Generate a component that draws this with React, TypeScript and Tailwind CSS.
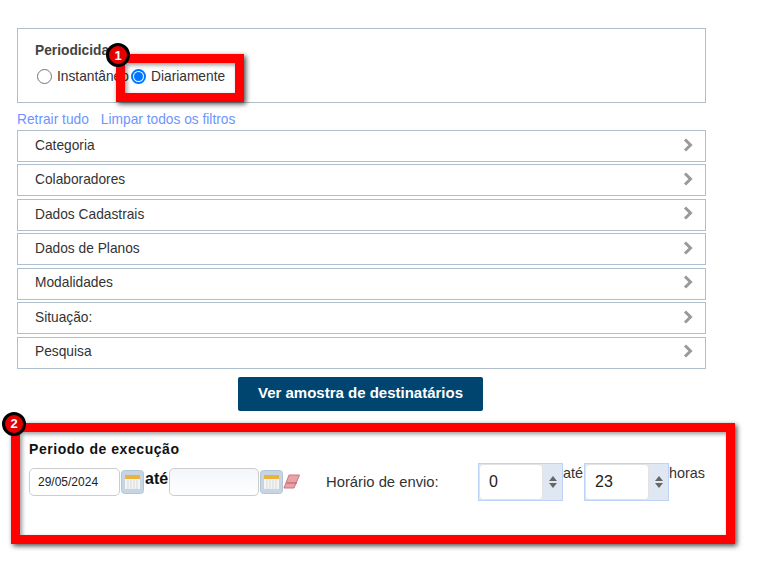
const filters = ["Categoria", "Colaboradores", "Dados Cadastrais", "Dados de Planos", "Modalidades", "Situação:", "Pesquisa"]

const Badge = ({ n, className }: { n: string; className: string }) => (
  <div className={`absolute flex h-[24px] w-[24px] items-center justify-center rounded-full border-[3px] border-black bg-[#e30000] text-[13px] font-bold leading-none text-white ${className}`}>
    {n}
  </div>
)

const CalendarIcon = () => (
  <svg width="23" height="24" viewBox="0 0 23 24" className="shrink-0">
    <rect x="0.5" y="0.5" width="22" height="23" rx="3" fill="#c5d5e4" stroke="#b3c6d8" />
    <rect x="4" y="5" width="15" height="14" fill="#f4f4f2" />
    <rect x="4" y="5" width="15" height="4" fill="#eeb23c" />
    <path d="M7 10v9M10 10v9M13 10v9M16 10v9" stroke="#d5dade" strokeWidth="1" />
  </svg>
)

const Eraser = () => (
  <svg width="17" height="15" viewBox="0 0 17 15" className="shrink-0">
    <path d="M6 1H16.5L11 14H1Z" fill="#e8a3a8" stroke="#c9767d" />
    <path d="M3.5 9H14" stroke="#b8565e" />
  </svg>
)

const Spinner = ({ value }: { value: string }) => (
  <div className="flex h-[38px] w-[85px] border border-[#bcd3f5] bg-[#dfe8f2]">
    <div className="flex h-[36px] w-[64px] items-center rounded-[4px] border border-[#e2e2e2] bg-white pl-[9px] text-[16px] text-[#222222]">
      {value}
    </div>
    <div className="flex flex-1 flex-col items-center justify-center gap-[2px]">
      <svg width="8" height="5" viewBox="0 0 8 5"><path d="M4 0 8 5H0Z" fill="#666666" /></svg>
      <svg width="8" height="5" viewBox="0 0 8 5"><path d="M4 5 8 0H0Z" fill="#666666" /></svg>
    </div>
  </div>
)

export default function App() {
  return (
    <div className="relative h-[572px] w-[777px] overflow-hidden bg-white pt-[28px] font-['Liberation_Sans',Arial,sans-serif] text-[13.75px] text-[#333333]">
      <div className="ml-[17px] w-[689px]">
        <div className="relative h-[75px] border border-[#b0bfcd] pl-[17px] pt-[12px]">
          <div className="font-bold text-[#444444]">Periodicidade</div>
          <div className="mt-[5px] flex items-center pl-[2px]">
            <span className="h-[15px] w-[15px] rounded-full border border-[#767676] bg-white" />
            <span className="ml-[5px] w-[74px] overflow-hidden whitespace-nowrap">Instantâneo</span>
            <span className="flex h-[15px] w-[15px] items-center justify-center rounded-full border-2 border-[#0075ff]">
              <span className="h-[9px] w-[9px] rounded-full bg-[#0075ff]" />
            </span>
            <span className="ml-[5px]">Diariamente</span>
          </div>
          {/* Red highlight 1 */}
          <div className="absolute left-[98px] top-[25px] h-[48px] w-[128px] border-[9px] border-[#ff0000] shadow-[2px_2px_5px_rgba(0,0,0,0.7),inset_2px_2px_4px_rgba(0,0,0,0.4)]" />
          <Badge n="1" className="left-[88px] top-[14px]" />
        </div>

        <div className="mt-[9px] flex h-[17px] items-center gap-[12px] text-[#6d94ff]">
          <span>Retrair tudo</span>
          <span>Limpar todos os filtros</span>
        </div>

        <div className="mt-[1px] flex flex-col gap-[2.45px]">
          {filters.map((name) => (
            <div key={name} className="flex h-[32px] items-center justify-between border border-[#b0bfcd] pl-[17px] pr-[12px]">
              <span>{name}</span>
              <svg width="10" height="14" viewBox="0 0 10 14" className="-mt-[3px]">
                <path d="M2 1.5 7.5 7 2 12.5" fill="none" stroke="#9a9a9a" strokeWidth="3" />
              </svg>
            </div>
          ))}
        </div>

        <div className="mt-[8px] flex justify-center pr-[2px]">
          <div className="flex h-[34px] w-[245px] items-center justify-center rounded-[2px] bg-[#00456f] text-[15px] font-bold text-white">
            Ver amostra de destinatários
          </div>
        </div>
      </div>

      {/* Red highlight 2 holds the execution period fields */}
      <div className="relative ml-[11px] mt-[12px] h-[121px] w-[724px] border-[9px] border-[#ff0000] pl-[9px] pt-[7px] shadow-[2px_2px_5px_rgba(0,0,0,0.7),inset_2px_2px_4px_rgba(0,0,0,0.4)]">
        <div className="text-[14px] font-bold tracking-[0.55px] text-[#111111]">Periodo de execução</div>
        <div className="mt-[8px] flex items-start">
          <div className="flex h-[28px] w-[91px] items-center rounded-[5px] border border-[#cccccc] pl-[8px] text-[12px] text-[#222222]">29/05/2024</div>
          <div className="ml-[1px] mt-[2px]"><CalendarIcon /></div>
          <span className="ml-[1px] w-[24px] text-[16px] font-bold leading-[22px] text-[#111111]">até</span>
          <div className="h-[28px] w-[90px] rounded-[5px] border border-[#cccccc] bg-gradient-to-b from-[#f3f6fa] to-white" />
          <div className="ml-[1px] mt-[2px]"><CalendarIcon /></div>
          <div className="mt-[6px]"><Eraser /></div>
          <span className="ml-[26px] mt-[3px] w-[152px] text-[14.8px]">Horário de envio:</span>
          <div className="-mt-[5px] flex items-start text-[14.4px]">
            <Spinner value="0" />
            <span className="w-[21px] leading-[20px]">até</span>
            <Spinner value="23" />
            <span className="leading-[20px]">horas</span>
          </div>
        </div>
        <Badge n="2" className="-left-[18px] -top-[20px]" />
      </div>
    </div>
  )
}
